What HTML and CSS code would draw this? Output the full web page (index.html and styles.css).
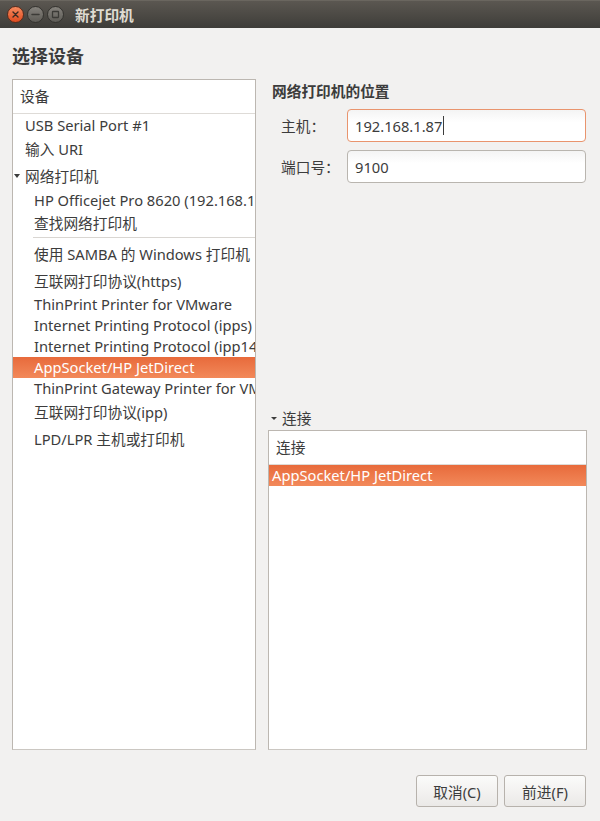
FILE: index.html
```html
<!DOCTYPE html>
<html lang="zh-CN">
<head>
<meta charset="utf-8">
<title>新打印机</title>
<link rel="stylesheet" href="styles.css">
</head>
<body>
<div class="window">
  <div class="titlebar">
    <div class="wbtns">
      <span class="wbtn close"><svg width="17" height="17" viewBox="0 0 17 17"><path d="M6 6 L11 11 M11 6 L6 11" stroke="#3a2a22" stroke-width="1.4" stroke-linecap="round"/></svg></span>
      <span class="wbtn"><svg width="17" height="17" viewBox="0 0 17 17"><path d="M5 8.5 H12" stroke="#3c3b37" stroke-width="1.5" stroke-linecap="round"/></svg></span>
      <span class="wbtn"><svg width="17" height="17" viewBox="0 0 17 17"><rect x="5.5" y="5.5" width="6" height="6" rx="0.5" fill="none" stroke="#3c3b37" stroke-width="1.3"/></svg></span>
    </div>
    <div class="wtitle">新打印机</div>
  </div>

  <div class="content">
    <div class="heading">选择设备</div>
    <div class="main">
      <div class="list">
        <div class="list-head">设备</div>
        <div class="row h22 l1">USB Serial Port #1</div>
        <div class="row h27 l1">输入 URI</div>
        <div class="row h26 l0"><span class="tri"></span>网络打印机</div>
        <div class="row h22 l2">HP Officejet Pro 8620 (192.168.1.87)</div>
        <div class="row h25 l2">查找网络打印机</div>
        <div class="sep"></div>
        <div class="row h27 l2">使用 SAMBA 的 Windows 打印机</div>
        <div class="row h26 l2">互联网打印协议(https)</div>
        <div class="row h21 l2">ThinPrint Printer for VMware</div>
        <div class="row h21 l2">Internet Printing Protocol (ipps)</div>
        <div class="row h21 l2">Internet Printing Protocol (ipp14)</div>
        <div class="row h21 l2 sel">AppSocket/HP JetDirect</div>
        <div class="row h21 l2">ThinPrint Gateway Printer for VMware</div>
        <div class="row h27 l2">互联网打印协议(ipp)</div>
        <div class="row h27 l2">LPD/LPR 主机或打印机</div>
      </div>

      <div class="right">
        <div class="sub">网络打印机的位置</div>
        <div class="form">
          <label class="lbl">主机：</label>
          <div class="entry focus"><span class="val">192.168.1.87</span><span class="caret"></span></div>
          <label class="lbl">端口号：</label>
          <div class="entry"><span class="val">9100</span></div>
        </div>

        <div class="conn">
          <div class="exp"><span class="tri small"></span>连接</div>
          <div class="tree">
            <div class="tree-head">连接</div>
            <div class="trow sel">AppSocket/HP JetDirect</div>
          </div>
        </div>
      </div>
    </div>

    <div class="actions">
      <button class="btn">取消(C)</button>
      <button class="btn">前进(F)</button>
    </div>
  </div>
</div>
</body>
</html>
```

FILE: styles.css
```css
* { box-sizing: border-box; }
html, body { margin: 0; padding: 0; }
body {
  width: 600px;
  height: 821px;
  overflow: hidden;
  background: #f2f1f0;
  font-family: "Noto Sans", "Noto Sans CJK SC", sans-serif;
  font-size: 14.7px;
  color: #3c3c3c;
}
.window { width: 600px; height: 821px; display: flex; flex-direction: column; }

.titlebar {
  height: 28px;
  flex: none;
  display: flex;
  align-items: center;
  background: linear-gradient(#5b5751, #3e3d39);
  border-top: 1px solid #6a665f;
}
.wbtns { display: flex; gap: 3px; padding-left: 7px; }
.wbtn {
  width: 17px; height: 17px;
  border-radius: 50%;
  background: linear-gradient(#85827c, #5d5b56);
  border: 1px solid #34332f;
  display: flex; align-items: center; justify-content: center;
  position: relative;
}
.wbtn svg { position: absolute; left: -1px; top: -1px; }
.wbtn.close { background: linear-gradient(#f68a5e, #df4b1f); border-color: #5a2c1c; }
.wtitle {
  margin-left: 11px;
  color: #dfdbd2;
  font-size: 14.7px;
  font-weight: 700;
}

.content { flex: 1; display: flex; flex-direction: column; padding: 0 13px 0 12px; }
.heading {
  height: 51px;
  display: flex; align-items: center;
  font-size: 18px;
  font-weight: 700;
  color: #3c3c3c;
  padding-top: 2px;
}
.main { display: flex; gap: 12px; height: 671px; }

.list {
  width: 244px;
  height: 671px;
  background: #fff;
  border: 1px solid #bcb7b1;
  border-bottom-color: #cbc7c2;
  overflow: hidden;
}
.list-head {
  height: 34px;
  border-bottom: 1px solid #dedbd7;
  padding-left: 7px;
  line-height: 33px;
}
.row { white-space: nowrap; overflow: hidden; position: relative; }
.h21 { height: 21px; line-height: 21px; }
.h22 { height: 22px; line-height: 22px; }
.h25 { height: 25px; line-height: 25px; }
.h26 { height: 26px; line-height: 26px; }
.h27 { height: 27px; line-height: 27px; }
.l0 { padding-left: 12px; }
.l1 { padding-left: 12px; }
.l2 { padding-left: 21px; }
.sel {
  background: linear-gradient(#e86a3b, #f2895a);
  color: #fff;
}
.sep { height: 4px; margin-left: 20px; border-top: 1px solid #d9d6d2; margin-top: 1px; }
.tri {
  display: inline-block;
  width: 0; height: 0;
  border-left: 3.5px solid transparent;
  border-right: 3.5px solid transparent;
  border-top: 4px solid #3c3c3c;
  margin-left: -11px;
  margin-right: 5px;
  vertical-align: middle;
  position: relative; top: -2px;
}
.tri.small {
  border-left-width: 3px; border-right-width: 3px; border-top-width: 3px;
  margin-left: 0; margin-right: 5px; top: -2px;
}

.right { width: 319px; display: flex; flex-direction: column; }
.sub { height: 24px; line-height: 24px; font-weight: 700; padding-left: 4px; }
.form {
  margin-top: 6px;
  display: grid;
  grid-template-columns: 79px 239px;
  row-gap: 8px;
  align-items: center;
}
.lbl { padding-left: 13px; }
.entry {
  height: 33px;
  border: 1px solid #b9b5af;
  border-radius: 4px;
  background: linear-gradient(#f4f4f4, #fff 40%);
  padding-left: 7px;
  display: flex; align-items: center;
  color: #3c3c3c;
}
.entry.focus { border-color: #e9946d; }
.caret { display: inline-block; width: 1px; height: 19px; background: #3c3c3c; margin-left: 1px; }

.conn { margin-top: auto; display: flex; flex-direction: column; }
.exp { height: 24px; line-height: 24px; padding-left: 3px; }
.tree {
  height: 320px;
  background: #fff;
  border: 1px solid #bcb7b1;
  border-bottom-color: #cbc7c2;
}
.tree-head { height: 34px; line-height: 33px; border-bottom: 1px solid #dedbd7; padding-left: 7px; }
.trow { height: 21px; line-height: 21px; padding-left: 3px; white-space: nowrap; }

.actions {
  display: flex;
  justify-content: flex-end;
  gap: 6px;
  margin-top: 25px;
  padding-right: 1px;
}
.btn {
  width: 82px; height: 32px;
  border: 1px solid #b7b2ac;
  border-radius: 3px;
  background: linear-gradient(#fbfbfa, #ebe9e7);
  font-family: inherit;
  font-size: 14.7px;
  color: #3c3c3c;
  padding: 0;
}
```
